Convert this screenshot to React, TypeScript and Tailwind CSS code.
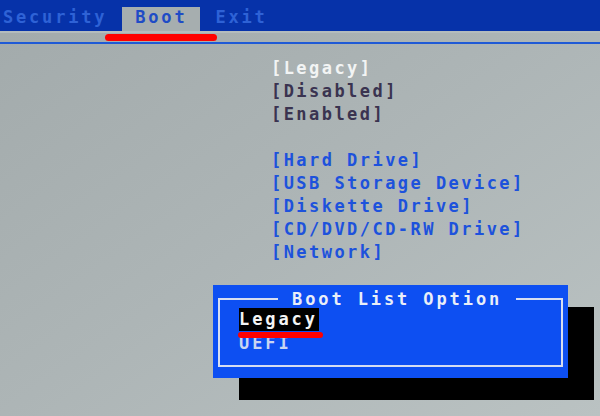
const mono = "font-['DejaVu_Sans_Mono','Liberation_Mono',monospace]";

const settings = [
  { text: "[Legacy]", color: "text-[#f2f4f4]" },
  { text: "[Disabled]", color: "text-[#3a3350]" },
  { text: "[Enabled]", color: "text-[#3a3350]" },
  { text: "", color: "" },
  { text: "[Hard Drive]", color: "text-[#1d52dc]" },
  { text: "[USB Storage Device]", color: "text-[#1d52dc]" },
  { text: "[Diskette Drive]", color: "text-[#1d52dc]" },
  { text: "[CD/DVD/CD-RW Drive]", color: "text-[#1d52dc]" },
  { text: "[Network]", color: "text-[#1d52dc]" },
];

function BootListDialog() {
  return (
    <div className="absolute left-[213px] top-[285px] h-[93px] w-[355px] bg-[#0d4ff2] px-[5px] pb-[11px] pt-[13px] shadow-[26px_22px_0_#000]">
      <div className="relative h-full border-2 border-[#d6def2] pl-[19px] pt-[8px]">
        <div className="absolute -top-[12px] left-[58px] bg-[#0d4ff2] px-[14px] text-[17px] leading-[22px] tracking-[2.9px] text-[#e9eef8]">
          Boot List Option
        </div>
        <div className="flex flex-col">
          <div className="relative w-fit">
            <span className="block bg-black pr-[1px] text-[17px] leading-[23px] tracking-[2.9px] text-[#f4f4f4]">Legacy</span>
            <span className="absolute -left-[1px] top-[24px] h-[6px] w-[85px] rounded-full bg-[#ff0000]" />
          </div>
          <span className="text-[17px] leading-[25px] tracking-[2.9px] text-[#c9d5f2]">UEFI</span>
        </div>
      </div>
    </div>
  );
}

export default function App() {
  return (
    <div className={`relative h-[416px] w-[600px] overflow-hidden bg-gradient-to-br from-[#a2aaab] via-[#adb5b6] to-[#bac2c2] font-bold ${mono}`}>
      <header className="flex h-[31px] items-end bg-[#0632a9] pl-[3px] text-[17px] tracking-[2.8px]">
        <span className="pb-[3px] leading-[22px] text-[#2e62d6]">Security</span>
        <span className="ml-[15px] flex h-[24px] items-end bg-[#a6aeaf] px-[13px] pb-[3px] leading-[22px] text-[#1f4cc6]">Boot</span>
        <span className="ml-[15px] pb-[3px] leading-[22px] text-[#2e62d6]">Exit</span>
      </header>
      <div className="relative h-[14px]">
        <div className="h-[2px] bg-[#b4bcbd]" />
        <div className="mt-[9px] h-[2px] bg-[#1f5ad6]" />
        <span className="absolute left-[105px] top-[3px] h-[7px] w-[112px] rounded-full bg-[#ff0000]" />
      </div>
      <main className="flex flex-col pl-[271px] pt-[12px] text-[17px] leading-[23px] tracking-[2.45px]">
        {settings.map((s, i) => (
          <span key={i} className={`h-[23px] ${s.color}`}>
            {s.text}
          </span>
        ))}
      </main>
      <BootListDialog />
    </div>
  );
}
